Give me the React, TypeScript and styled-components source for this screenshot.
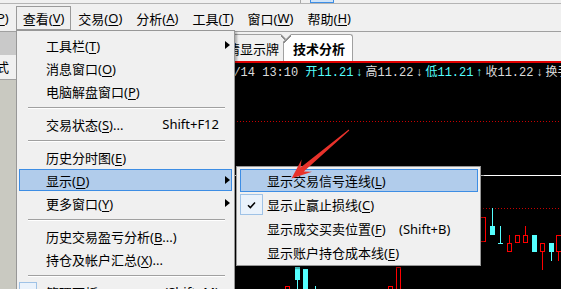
import React from 'react';
import styled, { createGlobalStyle } from 'styled-components';

const GlobalStyle = createGlobalStyle`
  html, body { margin: 0; padding: 0; }
  body { width: 561px; height: 289px; overflow: hidden; background: #f0f0f0; }
  #root { width: 561px; height: 289px; }
`;

const UI_FONT = `"Noto Sans", "Noto Sans CJK SC", sans-serif`;

const Screen = styled.div`
  position: relative;
  width: 561px;
  height: 289px;
  overflow: hidden;
  display: flex;
  flex-direction: column;
  background: #f0f0f0;
  font-family: ${UI_FONT};
  font-size: 13px;
  color: #000;
`;

const ToolStrip = styled.div`
  height: 3px;
  border-bottom: 1px solid #b4b4b4;
  display: flex;
  padding-left: 300px;
  gap: 9px;
`;
const ToolSep = styled.div`
  width: 1px;
  background: #a8a8a8;
`;
const ToolButton = styled.div`
  width: 22px;
  border: 1px solid #3c8ee6;
  border-top: none;
  background: #cfe3f8;
`;

const MenuBar = styled.div`
  height: 28px;
  box-sizing: border-box;
  border-bottom: 1px solid #a0a0a0;
  display: flex;
  align-items: flex-start;
  padding-top: 2px;
  white-space: nowrap;
`;

const MenuBarItem = styled.div<{ $open?: boolean; $lead?: boolean }>`
  height: 24px;
  box-sizing: border-box;
  padding: 0 6px;
  border: 1px solid ${(p) => (p.$open ? '#9a9a9a' : 'transparent')};
  display: flex;
  align-items: center;
  margin-left: ${(p) => (p.$lead ? '-40px' : '0')};
`;

const Key = styled.span`
  text-decoration: underline;
  text-decoration-thickness: 1px;
  text-underline-offset: 2px;
`;

const Body = styled.div`
  flex: 1;
  display: flex;
  min-height: 0;
`;

const LeftPanel = styled.div`
  width: 180px;
  display: flex;
  flex-direction: column;
`;
const LeftTabRow = styled.div`
  height: 23px;
  background: #c9c9c9;
`;
const LeftHeader = styled.div`
  height: 24px;
  line-height: 24px;
  background: #f0f0f0;
  text-indent: -17px;
  overflow: hidden;
  white-space: nowrap;
`;
const LeftBody = styled.div`
  flex: 1;
  background: #c9c9c1;
  border-top: 1px solid #a0a0a0;
`;

const RightPanel = styled.div`
  flex: 1;
  display: flex;
  flex-direction: column;
  min-width: 0;
`;

const TabRow = styled.div`
  height: 29px;
  display: flex;
  align-items: flex-end;
  padding-left: 21px;
  background: #f0f0f0;
`;

const SheetTab = styled.div<{ $active?: boolean }>`
  position: relative;
  height: 27px;
  box-sizing: border-box;
  display: flex;
  align-items: center;
  white-space: nowrap;
  border-top: 1px solid #a0a0a0;
  background: ${(p) => (p.$active ? '#ffffff' : '#f0f0f0')};
  font-weight: ${(p) => (p.$active ? 700 : 400)};
  z-index: ${(p) => (p.$active ? 1 : 0)};
  padding: ${(p) => (p.$active ? '0 7px 0 9px' : '0 9px 0 12px')};
  margin-left: ${(p) => (p.$active ? '-6px' : '0')};
  border-left: ${(p) => (p.$active ? '1px solid #a0a0a0' : '1px solid #a0a0a0')};
  border-right: 1px solid #a0a0a0;
  border-top-right-radius: ${(p) => (p.$active ? '3px' : '0')};
  clip-path: ${(p) =>
    p.$active
      ? 'polygon(0 8px, 8px 0, 100% 0, 100% 100%, 0 100%)'
      : 'polygon(0 0, calc(100% - 8px) 0, 100% 8px, 100% 100%, 0 100%)'};
  &::before {
    content: '';
    position: absolute;
    top: 0;
    width: 8px;
    height: 8px;
    ${(p) =>
      p.$active
        ? 'left: -1px; background: linear-gradient(to bottom right, transparent 42%, #8c8c8c 42%, #8c8c8c 58%, transparent 58%);'
        : 'right: -1px; background: linear-gradient(to bottom left, transparent 42%, #8c8c8c 42%, #8c8c8c 58%, transparent 58%);'}
  }
`;

const Chart = styled.div`
  flex: 1;
  background: #000;
  border-top: 2px solid #e00000;
  display: flex;
  flex-direction: column;
  min-height: 0;
`;

const InfoLine = styled.div`
  height: 20px;
  line-height: 20px;
  padding-left: 3px;
  white-space: nowrap;
  overflow: hidden;
  font-family: "Liberation Mono", "Noto Sans CJK SC", monospace;
  font-size: 12px;
`;

const Quote = styled.span<{ $tone: 'white' | 'cyan' }>`
  color: ${(p) => (p.$tone === 'cyan' ? '#55ffff' : '#dcdcdc')};
`;
const Arr = styled.span`
  display: inline-block;
  width: 12px;
  text-align: center;
`;

const Canvas = styled.div`
  flex: 1;
  min-height: 0;
  overflow: hidden;
  svg { display: block; }
`;

/* ---------- menus ---------- */

const DropMenu = styled.div`
  position: absolute;
  left: 16px;
  top: 30px;
  width: 219px;
  box-sizing: border-box;
  padding: 3px 2px 3px 2px;
  background: #f0f0f0;
  border: 1px solid #979797;
  box-shadow: 2px 2px 2px rgba(0, 0, 0, 0.28);
  z-index: 10;
`;

const SubMenu = styled.div`
  position: absolute;
  left: 236px;
  top: 166px;
  width: 245px;
  box-sizing: border-box;
  padding: 2px 2px 0 3px;
  background: #f0f0f0;
  border: 1px solid #979797;
  box-shadow: 3px 3px 1px rgba(0, 0, 0, 0.3);
  z-index: 11;
`;

const Item = styled.div<{ $active?: boolean; $sub?: boolean }>`
  display: grid;
  grid-template-columns: ${(p) => (p.$sub ? '26px 132px auto 1fr' : '26px 1fr auto 12px')};
  align-items: center;
  height: ${(p) => (p.$sub ? '23px' : '22px')};
  margin-bottom: 1px;
  box-sizing: border-box;
  white-space: nowrap;
  border: 1px solid ${(p) => (p.$active ? '#3d8de4' : 'transparent')};
  background: ${(p) => (p.$active ? '#b1cceb' : 'transparent')};
`;

const CheckFrame = styled.div<{ $w: number }>`
  width: ${(p) => p.$w}px;
  height: 100%;
  box-sizing: border-box;
  margin-left: -1px;
  border: 1px solid #9fc2e6;
  background: #eaf2fb;
  display: flex;
  align-items: center;
  justify-content: center;
`;

const Label = styled.span`
  grid-column: 2;
`;
const Shortcut = styled.span<{ $right?: boolean }>`
  grid-column: 3;
  justify-self: ${(p) => (p.$right ? 'end' : 'start')};
`;
const SubArrow = styled.span`
  grid-column: 4;
  justify-self: end;
  margin-right: 1px;
  width: 0;
  height: 0;
  border-top: 4px solid transparent;
  border-bottom: 4px solid transparent;
  border-left: 5px solid #000;
`;

const Separator = styled.div`
  height: 10px;
  box-sizing: border-box;
  padding: 4px 7px 0 9px;
  &::after {
    content: '';
    display: block;
    height: 0;
    border-top: 1px solid #a0a0a0;
    border-bottom: 1px solid #ffffff;
  }
`;

const Annotation = styled.svg`
  position: absolute;
  left: 0;
  top: 0;
  width: 561px;
  height: 289px;
  pointer-events: none;
  z-index: 20;
`;

type Entry =
  | { sep: true }
  | {
      sep?: false;
      label: string;
      k: string;
      close?: string;
      shortcut?: string;
      sub?: boolean;
      active?: boolean;
      check?: 'empty' | 'on';
    };

const mainEntries: Entry[] = [
  { label: '工具栏', k: 'T', sub: true },
  { label: '消息窗口', k: 'O' },
  { label: '电脑解盘窗口', k: 'P' },
  { sep: true },
  { label: '交易状态', k: 'S', close: ')...', shortcut: 'Shift+F12' },
  { sep: true },
  { label: '历史分时图', k: 'E' },
  { label: '显示', k: 'D', sub: true, active: true },
  { label: '更多窗口', k: 'Y', sub: true },
  { sep: true },
  { label: '历史交易盈亏分析', k: 'B', close: '...)' },
  { label: '持仓及帐户汇总', k: 'X', close: ')...' },
  { sep: true },
  { label: '管理面板', k: 'M', close: ')...', shortcut: '(Shift+M)', check: 'empty' },
];

const subEntries: Entry[] = [
  { label: '显示交易信号连线', k: 'L', active: true },
  { label: '显示止赢止损线', k: 'C', check: 'on' },
  { label: '显示成交买卖位置', k: 'F', shortcut: '(Shift+B)' },
  { label: '显示账户持仓成本线', k: 'E' },
];

const menuBar = [
  { label: '系统', k: 'P' },
  { label: '查看', k: 'V', open: true },
  { label: '交易', k: 'O' },
  { label: '分析', k: 'A' },
  { label: '工具', k: 'T' },
  { label: '窗口', k: 'W' },
  { label: '帮助', k: 'H' },
];

function CheckMark() {
  return (
    <svg width="9" height="8" viewBox="0 0 9 8">
      <path d="M1 4.2 L3.4 6.6 L8 1.4" fill="none" stroke="#000" strokeWidth="1.5" />
    </svg>
  );
}

function renderEntries(entries: Entry[], isSub: boolean) {
  return entries.map((e, i) => {
    if (e.sep) return <Separator key={i} />;
    return (
      <Item key={i} $active={e.active} $sub={isSub}>
        {e.check ? (
          <CheckFrame $w={isSub ? 23 : 18}>{e.check === 'on' ? <CheckMark /> : null}</CheckFrame>
        ) : null}
        <Label>
          {e.label}(<Key>{e.k}</Key>
          {e.close ?? ')'}
        </Label>
        {e.shortcut ? <Shortcut $right={!isSub}>{e.shortcut}</Shortcut> : null}
        {e.sub ? <SubArrow /> : null}
      </Item>
    );
  });
}

const RED = '#ff0000';
const CYAN = '#55ffff';

function CandleChart() {
  return (
    <svg width="381" height="206" viewBox="180 83 381 206">
      <line x1="180" y1="121.5" x2="561" y2="121.5" stroke="#c80000" strokeDasharray="1 2" />
      <line x1="180" y1="175.5" x2="561" y2="175.5" stroke="#ffffff" />
      <line x1="180" y1="208.5" x2="561" y2="208.5" stroke="#c80000" strokeDasharray="1 2" />
      <g fill="none" stroke={RED} strokeWidth="1">
        <rect x="476.5" y="217.5" width="9" height="24" />
        <line x1="509.5" y1="235" x2="509.5" y2="243" />
        <rect x="507.5" y="243.5" width="4" height="8" />
        <rect x="515.5" y="235.5" width="4" height="7" />
        <line x1="525.5" y1="226" x2="525.5" y2="235" />
        <rect x="523.5" y="235.5" width="4" height="7" />
        <rect x="540.5" y="243.5" width="4" height="8" />
        <line x1="542.5" y1="252" x2="542.5" y2="270" />
        <rect x="556.5" y="235.5" width="6" height="16" />
        <line x1="558.5" y1="252" x2="558.5" y2="261" />
        <rect x="285.5" y="286.5" width="4" height="6" />
        <rect x="396.5" y="267.5" width="4" height="26" />
        <rect x="388.5" y="286.5" width="4" height="6" />
      </g>
      <g fill={CYAN} stroke="none">
        <rect x="492" y="208" width="1" height="18" />
        <rect x="490" y="226" width="5" height="9" />
        <rect x="500" y="226" width="1" height="17" />
        <rect x="498" y="243" width="5" height="1" />
        <rect x="532" y="235" width="5" height="17" />
        <rect x="549" y="243" width="5" height="9" />
        <rect x="551" y="252" width="1" height="9" />
        <rect x="295" y="267" width="5" height="13" />
        <rect x="297" y="280" width="1" height="9" />
        <rect x="303" y="269" width="5" height="20" />
        <rect x="315" y="286" width="1" height="4" />
      </g>
    </svg>
  );
}

export default function App() {
  return (
    <>
      <GlobalStyle />
      <Screen>
        <ToolStrip>
          <ToolSep />
          <ToolButton />
        </ToolStrip>
        <MenuBar>
          {menuBar.map((m, i) => (
            <MenuBarItem key={m.label} $open={m.open} $lead={i === 0}>
              {m.label}(<Key>{m.k}</Key>)
            </MenuBarItem>
          ))}
        </MenuBar>
        <Body>
          <LeftPanel>
            <LeftTabRow />
            <LeftHeader>公式</LeftHeader>
            <LeftBody />
          </LeftPanel>
          <RightPanel>
            <TabRow>
              <SheetTab>行情显示牌</SheetTab>
              <SheetTab $active>技术分析</SheetTab>
            </TabRow>
            <Chart>
              <InfoLine>
                <Quote $tone="white">2023/07/14 13:10 </Quote>
                <Quote $tone="cyan">
                  开11.21<Arr>↓</Arr>
                </Quote>
                <Quote $tone="white">
                  高11.22<Arr>↓</Arr>
                </Quote>
                <Quote $tone="cyan">
                  低11.21<Arr>↑</Arr>
                </Quote>
                <Quote $tone="white">
                  收11.22<Arr>↓</Arr>
                </Quote>
                <Quote $tone="white">换手0.12%</Quote>
              </InfoLine>
              <Canvas>
                <CandleChart />
              </Canvas>
            </Chart>
          </RightPanel>
        </Body>

        <DropMenu>{renderEntries(mainEntries, false)}</DropMenu>
        <SubMenu>{renderEntries(subEntries, true)}</SubMenu>

        <Annotation viewBox="0 0 561 289">
          <polygon
            points="349.3,130.4 303.8,171.4 312,171.7 291.5,178.5 301.6,159.5 300.6,167.6 348.7,129.6"
            fill="#e8322b"
          />
        </Annotation>
      </Screen>
    </>
  );
}
